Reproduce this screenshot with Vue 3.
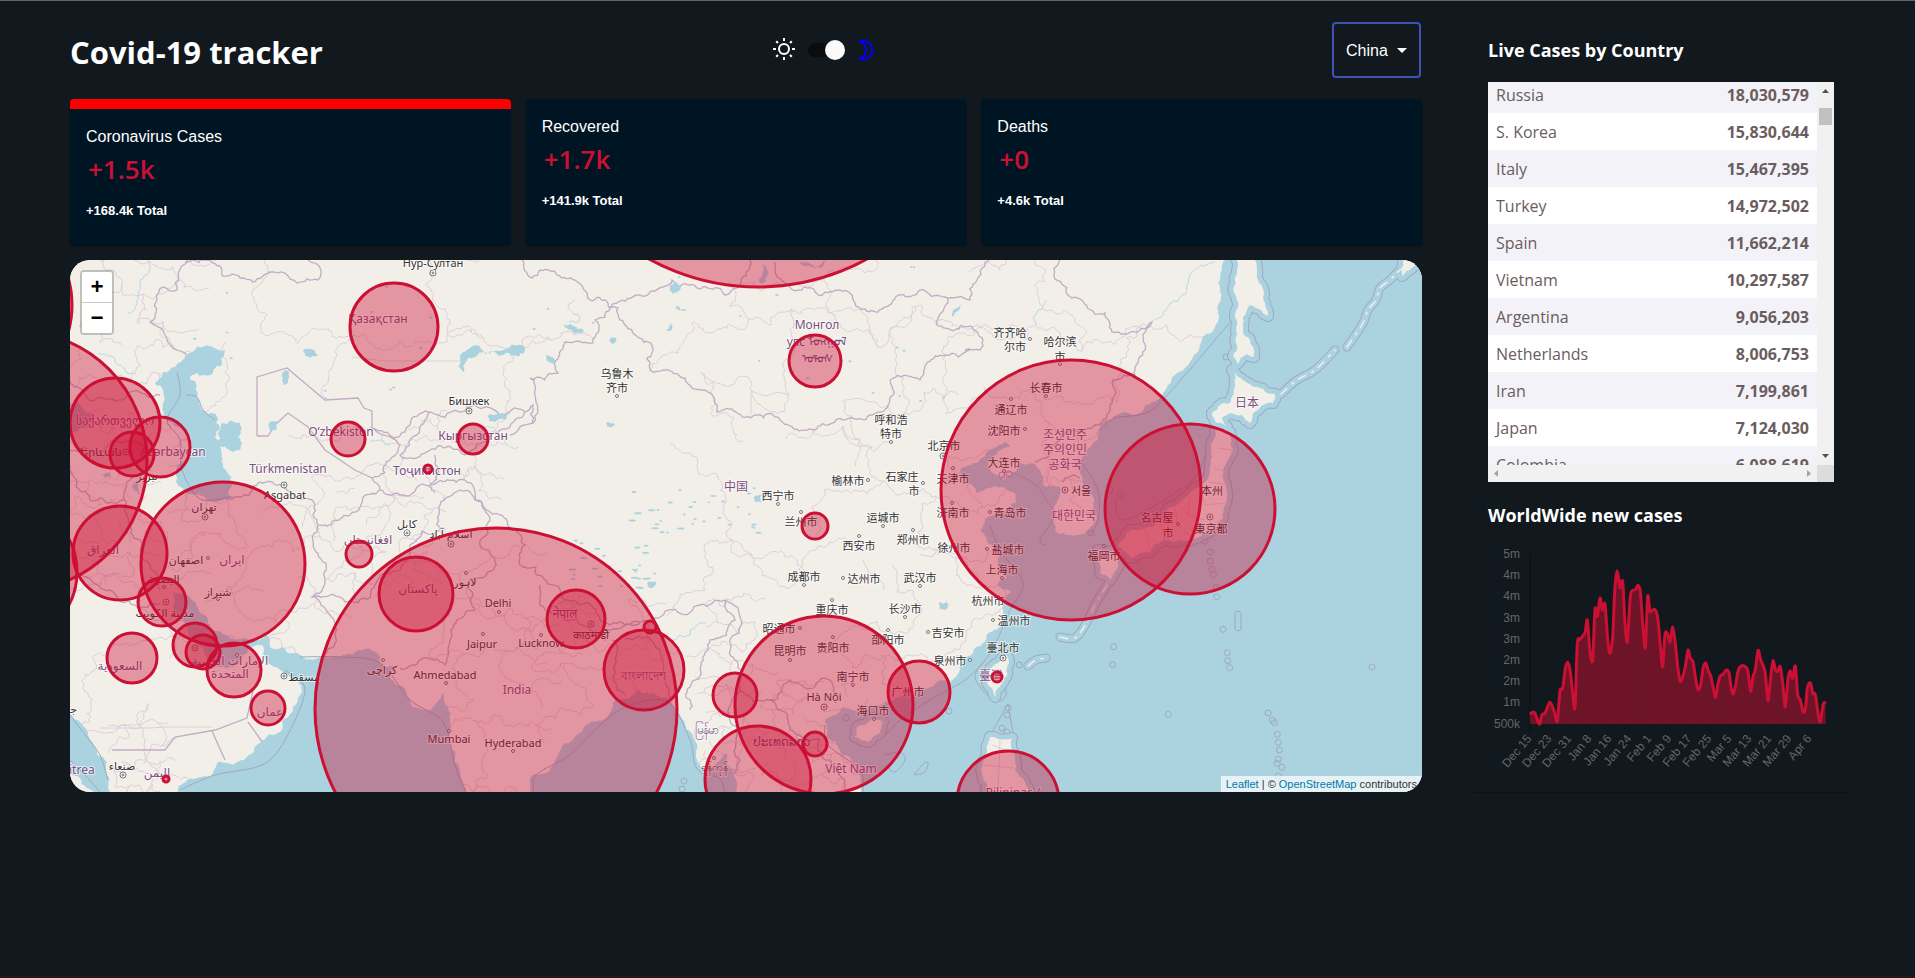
<script setup>
import { ref } from 'vue'

const countries = ['Worldwide', 'USA', 'India', 'Brazil', 'France', 'China']
const country = ref('China')
const dark = ref(true)
const activeCard = ref(0)

const stats = [
  { title: 'Coronavirus Cases', value: '+1.5k', total: '+168.4k Total' },
  { title: 'Recovered', value: '+1.7k', total: '+141.9k Total' },
  { title: 'Deaths', value: '+0', total: '+4.6k Total' }
]

const rows = [
  ['Russia', '18,030,579'],
  ['S. Korea', '15,830,644'],
  ['Italy', '15,467,395'],
  ['Turkey', '14,972,502'],
  ['Spain', '11,662,214'],
  ['Vietnam', '10,297,587'],
  ['Argentina', '9,056,203'],
  ['Netherlands', '8,006,753'],
  ['Iran', '7,199,861'],
  ['Japan', '7,124,030'],
  ['Colombia', '6,088,619']
]

/* ---------- map geometry ---------- */

let seed = 7
function rnd() {
  seed = (seed * 16807) % 2147483647
  return seed / 2147483647
}

function toPoints(flat) {
  const out = []
  for (let i = 0; i < flat.length; i += 2) out.push([flat[i], flat[i + 1]])
  return out
}

/* splits every segment until it is short and shifts the midpoints, as a coast or a border would bend */
function split(a, b, amp, min, out) {
  const dx = b[0] - a[0]
  const dy = b[1] - a[1]
  const len = Math.hypot(dx, dy)
  if (len < min) {
    out.push(b)
    return
  }
  const k = (rnd() - 0.5) * amp
  const m = [(a[0] + b[0]) / 2 - dy * k, (a[1] + b[1]) / 2 + dx * k]
  split(a, m, amp, min, out)
  split(m, b, amp, min, out)
}

function rough(flat, closed = false, amp = 0.5, min = 4) {
  const pts = toPoints(flat)
  if (closed) pts.push(pts[0])
  const out = [pts[0]]
  for (let i = 1; i < pts.length; i++) split(pts[i - 1], pts[i], amp, min, out)
  return 'M' + out.map((p) => p[0].toFixed(1) + ' ' + p[1].toFixed(1)).join('L') + (closed ? 'Z' : '')
}

function curve(points, tension) {
  let d = 'M' + points[0].join(' ')
  for (let i = 0; i < points.length - 1; i++) {
    const p0 = points[Math.max(0, i - 1)]
    const p1 = points[i]
    const p2 = points[i + 1]
    const p3 = points[Math.min(points.length - 1, i + 2)]
    const c = [
      p1[0] + (p2[0] - p0[0]) * tension,
      p1[1] + (p2[1] - p0[1]) * tension,
      p2[0] - (p3[0] - p1[0]) * tension,
      p2[1] - (p3[1] - p1[1]) * tension,
      p2[0],
      p2[1]
    ].map((v) => v.toFixed(1))
    d += `C${c[0]} ${c[1]} ${c[2]} ${c[3]} ${c[4]} ${c[5]}`
  }
  return d
}
const smooth = (flat) => curve(toPoints(flat), 0.16)

/* province lines: a jittered brick lattice per region [x, y, width, height, cell] */
const regions = [
  [70, 260, 110, 150, 30], [70, 410, 110, 170, 18], [180, 260, 350, 150, 80], [180, 500, 140, 150, 38],
  [330, 490, 110, 100, 22], [290, 440, 120, 60, 40], [400, 420, 100, 70, 28], [70, 590, 180, 130, 60],
  [110, 725, 60, 70, 16], [500, 620, 60, 80, 30], [420, 560, 110, 240, 44], [540, 610, 120, 120, 32],
  [640, 262, 330, 150, 66], [800, 440, 190, 130, 52], [840, 570, 170, 140, 46], [690, 600, 60, 170, 24],
  [760, 680, 100, 112, 16], [960, 262, 160, 170, 70], [1040, 430, 70, 110, 26],
  [985, 735, 40, 60, 12], [660, 470, 140, 120, 84], [700, 690, 60, 100, 20]
]
function lattice([x, y, w, h, c]) {
  const cols = Math.ceil(w / c)
  const lines = Math.ceil(h / c)
  const v = []
  for (let j = 0; j <= lines; j++) {
    v.push([])
    for (let i = 0; i <= cols; i++) {
      v[j].push([x + i * c + (j % 2 ? c / 2 : 0) + (rnd() - 0.5) * c * 0.7, y + j * c + (rnd() - 0.5) * c * 0.7])
    }
  }
  let d = ''
  for (let j = 0; j < lines; j++) {
    for (let i = 0; i < cols; i++) {
      if (rnd() > 0.25) d += rough([...v[j][i], ...v[j][i + 1]], false, 0.6, 4)
      if ((i + j) % 2 && rnd() > 0.1) d += rough([...v[j][i], ...v[j + 1][i]], false, 0.6, 4)
    }
  }
  return d
}
const provinces = regions.map(lattice).join('')

/* the seas close well outside the visible area, so that only their coasts show */
const seas = [
  [1226, 255, 1222, 270, 1218, 283, 1221, 300, 1218, 322, 1203, 337, 1193, 357, 1177, 373, 1163, 393, 1142, 412, 1117, 415, 1105, 420, 1100, 427, 1098, 440, 1087, 450, 1077, 463, 1083, 480, 1093, 497, 1097, 517, 1093, 525, 1088, 530, 1070, 535, 1057, 533, 1053, 520, 1055, 505, 1060, 487, 1043, 485, 1040, 470, 1032, 463, 1020, 463, 1003, 480, 988, 463, 1000, 450, 1010, 447, 1005, 442, 990, 450, 977, 463, 965, 467, 960, 470, 965, 480, 977, 493, 990, 488, 1015, 493, 1017, 502, 1000, 513, 985, 520, 980, 530, 997, 550, 998, 563, 1007, 577, 997, 585, 1012, 592, 1003, 603, 1002, 623, 988, 633, 983, 643, 973, 653, 960, 670, 950, 682, 923, 690, 900, 697, 873, 707, 860, 713, 843, 707, 825, 720, 827, 737, 840, 750, 857, 767, 864, 795, 864, 1000, 1700, 1000, 1700, 50, 1226, 50],
  [173, 592, 187, 595, 200, 613, 210, 627, 230, 638, 250, 640, 267, 635, 270, 647, 293, 653, 320, 657, 343, 655, 377, 653, 380, 663, 397, 667, 390, 678, 403, 687, 413, 707, 430, 710, 443, 693, 448, 707, 450, 733, 460, 770, 465, 795, 465, 900, 175, 900, 175, 795, 187, 780, 213, 773, 217, 763, 247, 757, 260, 743, 280, 732, 282, 722, 293, 707, 302, 690, 290, 677, 267, 663, 262, 645, 247, 653, 233, 667, 220, 667, 207, 660, 193, 640, 187, 627, 173, 607],
  [50, 712, 66, 712, 80, 722, 93, 743, 107, 762, 110, 795, 110, 830, 96, 830, 96, 795, 80, 778, 66, 768, 50, 768],
  [532, 795, 533, 775, 553, 765, 573, 740, 607, 717, 613, 702, 637, 690, 657, 695, 670, 700, 683, 720, 693, 737, 697, 760, 702, 770, 717, 763, 727, 753, 733, 773, 737, 795, 737, 880, 532, 880]
].map((p) => rough(p, true, 0.35, 4))

const waters = [
  [170, 370, 185, 356, 203, 347, 225, 350, 221, 366, 203, 375, 190, 378, 197, 397, 217, 417, 215, 437, 223, 443, 223, 467, 232, 477, 233, 500, 207, 500, 183, 488, 177, 467, 190, 450, 188, 433, 173, 423, 163, 407, 163, 390, 155, 383, 162, 373],
  [222, 423, 240, 423, 237, 437, 242, 443, 233, 452, 222, 447],
  [66, 400, 78, 402, 93, 413, 87, 428, 66, 437],
  [270, 422, 277, 421, 276, 430, 270, 431],
  [285, 370, 288, 371, 285, 385, 283, 384],
  [303, 351, 310, 349, 318, 355, 310, 358],
  [458, 367, 460, 357, 467, 350, 480, 347, 500, 351, 525, 348, 524, 353, 500, 356, 480, 352, 468, 358, 464, 372],
  [487, 416, 498, 413, 510, 413, 505, 420, 495, 422],
  [670, 285, 677, 282, 680, 290, 673, 294],
  [564, 324, 572, 325, 584, 331, 580, 333, 568, 329],
  [546, 354, 552, 357, 554, 364, 549, 362],
  [510, 351, 520, 347, 519, 353, 511, 356],
  [762, 264, 766, 267, 763, 284, 760, 283],
  [800, 262, 828, 260, 820, 265, 806, 266],
  [676, 305, 687, 309, 684, 311, 676, 308],
  [666, 330, 671, 323, 672, 329, 668, 331],
  [610, 339, 616, 338, 613, 346],
  [754, 497, 762, 495, 761, 503, 755, 502],
  [606, 423, 615, 424, 612, 427, 607, 426],
  [630, 570, 638, 568, 636, 573],
  [647, 583, 656, 582, 650, 588],
  [952, 314, 960, 304, 958, 311, 953, 317],
  [938, 603, 947, 600, 945, 610, 940, 609],
  [102, 475, 110, 472, 112, 477, 105, 479],
  [134, 480, 139, 484, 138, 495, 134, 490]
].map((p) => rough(p, true, 0.5, 3))

const rivers = [
  [148, 260, 140, 280, 138, 296, 128, 313], [575, 300, 568, 306, 580, 318, 569, 322], [1215, 262, 1190, 274, 1182, 295, 1170, 303, 1155, 320],
  [98, 353, 118, 365, 136, 374], [1046, 300, 1038, 310, 1036, 325], [672, 640, 690, 635, 706, 623], [370, 442, 390, 445]
].map((p) => rough(p, false, 0.5, 4))

const specks = []
for (let i = 0; i < 34; i++) specks.push([630 + rnd() * 130, 488 + rnd() * 45, 1 + rnd() * 3])
for (let i = 0; i < 26; i++) specks.push([565 + rnd() * 90, 540 + rnd() * 50, 1 + rnd() * 3])
for (let i = 0; i < 30; i++) specks.push([190 + rnd() * 760, 265 + rnd() * 140, 1 + rnd()])

const islands = [
  [1235, 255, 1253, 255, 1258, 280, 1265, 303, 1268, 316, 1262, 311, 1250, 305, 1243, 317, 1243, 333, 1253, 347, 1254, 357, 1247, 354, 1237, 364, 1233, 356, 1237, 333, 1235, 317, 1237, 300, 1235, 277],
  [1232, 370, 1247, 383, 1267, 393, 1275, 394, 1273, 403, 1260, 407, 1250, 423, 1230, 413, 1222, 418, 1227, 427, 1217, 423, 1212, 413, 1220, 405, 1230, 403, 1235, 387],
  [1215, 430, 1230, 432, 1233, 450, 1223, 470, 1227, 497, 1223, 517, 1213, 530, 1195, 538, 1180, 540, 1165, 540, 1150, 552, 1130, 558, 1118, 545, 1130, 530, 1155, 525, 1170, 507, 1190, 493, 1207, 480, 1212, 457],
  [1098, 550, 1117, 550, 1118, 567, 1110, 580, 1100, 573, 1098, 560],
  [1007, 655, 1009, 663, 1002, 683, 995, 697, 987, 683, 992, 667],
  [990, 737, 1012, 738, 1012, 750, 1015, 770, 1030, 795, 987, 795, 982, 775],
  [857, 727, 873, 718, 883, 722, 880, 733, 868, 742, 855, 737],
  [1403, 255, 1425, 255, 1412, 268, 1402, 276]
].map((p) => rough(p, true, 0.3, 4))

const chains = [
  [1347, 347, 1362, 325, 1368, 310, 1376, 300, 1380, 288, 1390, 280, 1400, 270, 1422, 252],
  [1281, 394, 1297, 380, 1315, 370, 1335, 350],
  [1060, 637, 1075, 638, 1087, 622, 1095, 605, 1107, 585],
  [1028, 666, 1036, 660, 1046, 658]
].map(smooth)

const borders = [
  [187, 260, 185, 264, 177, 290, 163, 287, 157, 300, 150, 322, 163, 330, 177, 350, 187, 357],
  [185, 262, 213, 263, 240, 278, 253, 282, 270, 272, 297, 283, 318, 280, 320, 268, 307, 258],
  [372, 428, 390, 437, 405, 432, 430, 412, 460, 412, 475, 405, 525, 412, 533, 405, 533, 423, 510, 435],
  [232, 500, 260, 482, 295, 497, 315, 505, 318, 525, 350, 515, 365, 495, 380, 490, 400, 495, 420, 485, 435, 493],
  [372, 428, 400, 445, 390, 460, 372, 478, 380, 490],
  [318, 525, 315, 550, 325, 580, 312, 597, 330, 615, 335, 635, 325, 655],
  [312, 597, 345, 602, 370, 598, 400, 570, 410, 545, 440, 530, 440, 505, 460, 490, 475, 500],
  [430, 412, 400, 455, 430, 450, 465, 455, 500, 430, 525, 412],
  [435, 455, 430, 485, 465, 480, 475, 500],
  [475, 500, 490, 520, 480, 545, 495, 560, 470, 580, 475, 610, 450, 640, 445, 665, 415, 665, 400, 668],
  [533, 423, 535, 395, 530, 378, 558, 373, 565, 342, 593, 343, 595, 320, 610, 308],
  [522, 260, 532, 278, 540, 270, 575, 280, 590, 300, 605, 300, 610, 308, 640, 295, 672, 280, 690, 285, 725, 295, 737, 288, 750, 260],
  [775, 262, 790, 287, 805, 287, 840, 290, 855, 303, 885, 307, 920, 290, 945, 297, 970, 300, 977, 280, 990, 258],
  [610, 308, 618, 308, 625, 325, 652, 345, 653, 372, 685, 378, 705, 390, 717, 412, 755, 415, 815, 430, 850, 418, 880, 412, 893, 395, 890, 380, 920, 380, 945, 355, 970, 350],
  [947, 297, 937, 325, 955, 330, 970, 326, 983, 340, 980, 350, 965, 350],
  [1060, 258, 1072, 298, 1105, 313, 1112, 332, 1130, 332, 1152, 322, 1145, 350, 1135, 370, 1135, 375, 1113, 380, 1110, 405, 1095, 425, 1075, 430, 1060, 440, 1035, 462],
  [1062, 482, 1080, 478],
  [475, 500, 500, 515, 525, 545, 520, 565, 545, 580, 565, 600, 600, 620, 640, 622, 655, 618, 700, 605, 725, 600, 735, 620, 710, 640, 695, 680, 690, 710],
  [540, 585, 540, 605, 565, 620, 605, 640, 640, 622],
  [725, 600, 742, 622, 735, 660, 740, 690, 770, 700, 790, 680, 830, 680, 840, 700],
  [740, 690, 730, 720, 740, 760, 735, 792], [770, 700, 790, 730, 820, 740, 840, 775, 845, 792],
  [612, 640, 615, 665, 625, 695], [625, 640, 660, 650, 665, 680, 672, 698],
  [80, 575, 110, 590, 135, 605, 160, 603], [130, 480, 125, 500, 140, 540, 150, 565, 160, 590],
  [70, 470, 90, 500, 125, 500], [70, 450, 100, 452, 130, 440, 150, 470, 130, 480], [70, 380, 120, 400, 160, 395]
].map((p) => rough(p, false, 0.45, 4))

const plainBorders = [
  'M257 436V377L287 368 325 400 358 398 364 408 372 411V428M257 436H268L275 425 288 413 308 427 325 450 355 470 372 478',
  'M112 750H150L165 750 175 737 215 730 247 718 253 690M212 731L225 760M248 722L263 743'
]
const plainProvinces =
  'M352 357L385 361H460M100 728H150L165 727H212M751 391V415M751 391L765 396 778 392 790 395M1218 448L1232 450M1214 468L1224 471M1208 482L1226 484M1200 490L1205 505 1225 503M1190 496L1188 515 1205 520M1175 508L1178 525 1192 538M1160 522L1165 540M1145 528L1150 550M992 745L1010 752M985 765L1013 768M1000 740L998 790'

const marine = [
  [186, 395, 197, 397, 203, 410, 215, 420], [177, 372, 180, 395, 167, 420, 180, 440, 182, 470, 200, 499, 230, 497],
  [300, 657, 340, 657, 380, 663, 410, 700, 443, 722, 455, 765, 467, 795], [180, 790, 215, 775, 262, 765, 285, 740, 305, 690, 285, 670],
  [534, 795, 536, 775, 570, 755, 600, 725, 630, 705, 668, 702, 690, 740, 695, 765, 705, 775, 720, 778, 725, 795],
  [863, 795, 860, 770, 828, 745, 825, 725], [854, 730, 865, 743, 885, 735, 900, 720, 930, 700, 965, 680, 985, 660, 997, 640, 1010, 610, 1023, 583, 1000, 550, 990, 525],
  [985, 660, 975, 678, 993, 700, 1005, 697, 1006, 680, 1011, 653, 990, 665], [1008, 704, 990, 737, 985, 760, 980, 792], [1008, 704, 1014, 740, 1015, 760, 1034, 795],
  [1046, 545, 1040, 540, 1055, 515, 1046, 500, 1036, 485, 1010, 472, 1000, 480], [1080, 460, 1098, 490, 1098, 520, 1090, 535],
  [1100, 430, 1115, 418, 1150, 411, 1185, 375, 1215, 340, 1232, 320], [885, 755, 900, 752, 905, 760, 895, 772, 885, 765], [914, 775, 922, 765, 928, 762, 925, 772, 915, 775],
  [70, 760, 85, 775, 100, 792], [70, 715, 85, 735, 100, 755, 108, 780], [1115, 500, 1125, 520, 1180, 490, 1200, 470, 1208, 440]
].map(smooth)

const isles = [
  [1113.7, 646.7], [1112.7, 664.7], [1223, 629.3], [1227.3, 652.7], [1227.7, 660.7], [1229.7, 667.7], [1372, 667], [1168.3, 714.3],
  [1268.3, 713], [1272.3, 720], [1274.3, 722.7], [1277.3, 734.3], [1278.3, 742.3], [1279.3, 750], [1278.3, 759.3], [1277.3, 763.3], [1281.7, 767.3], [1278.5, 776], [1273, 785],
  [1019.3, 665], [1210.3, 552], [1210.3, 561], [1212, 569], [1213.3, 574.7], [1216.3, 587.3], [1216.7, 596.7], [1237, 355.7],
  [684, 781], [682, 789], [846, 718], [1110, 490], [1120, 495], [1002, 475], [1009, 474], [1091, 533], [1205, 541], [949, 711],
  [1008, 708], [1007, 715], [1002, 728], [1007, 732], [1226, 357]
]

const cities = [
  ['Нур-Султан', 433, 267], ['Бишкек', 469, 405], ['Aşgabat', 285, 499], ['Երևան', 101, 456], ['تبریز', 147, 480], ['تهران', 204, 511],
  ['اصفهان', 186, 564], ['البصرة', 164, 583], ['شیراز', 218, 596], ['مدينة الكويت', 165, 617], ['مسقط', 304, 681], ['صنعاء', 122, 770],
  ['جدة', 68, 713], ['کابل', 407, 528], ['اسلام آباد', 451, 538], ['لاہور', 465, 586], ['Delhi', 498, 607], ['Jaipur', 482, 648], ['كراچی', 382, 674],
  ['Ahmedabad', 445, 679], ['Mumbai', 449, 743], ['Hyderabad', 513, 747], ['Lucknow', 541, 647], ['काठमाडौं', 591, 639],
  ['ရန်ကုန်', 714, 771], ['Hà Nội', 824, 701], ['乌鲁木', 617, 378], ['齐市', 617, 392], ['西宁市', 778, 500], ['兰州市', 801, 526],
  ['榆林市', 848, 485], ['石家庄', 902, 481], ['市', 914, 495], ['运城市', 883, 522], ['呼和浩', 891, 424], ['特市', 891, 438],
  ['北京市', 944, 450], ['天津市', 953, 483], ['济南市', 953, 517], ['西安市', 859, 550], ['郑州市', 913, 544], ['徐州市', 954, 552],
  ['成都市', 804, 581], ['达州市', 864, 583], ['武汉市', 920, 582], ['重庆市', 832, 614], ['长沙市', 905, 613], ['昭通市', 779, 633],
  ['昆明市', 790, 655], ['贵阳市', 833, 652], ['邵阳市', 888, 644], ['吉安市', 948, 637], ['泉州市', 950, 665], ['南宁市', 853, 681],
  ['海口市', 873, 715], ['广州市', 908, 696], ['齐齐哈', 1010, 337], ['尔市', 1015, 351], ['哈尔滨', 1060, 346], ['市', 1060, 361],
  ['长春市', 1046, 392], ['通辽市', 1011, 414], ['沈阳市', 1004, 435], ['大连市', 1004, 467], ['서울', 1081, 495], ['青岛市', 1010, 517],
  ['盐城市', 1008, 554], ['上海市', 1002, 574], ['杭州市', 988, 605], ['温州市', 1014, 625], ['臺北市', 1003, 652], ['本州', 1212, 495],
  ['東京都', 1211, 533], ['名古屋', 1157, 522], ['市', 1168, 537], ['福岡市', 1104, 560]
]

const nations = [
  ['Қазақстан', 378, 323], ['Кыргызстан', 473, 440], ['Oʻzbekiston', 341, 436], ['Тоҷикистон', 427, 475], ['Türkmenistan', 288, 473],
  ['საქართველო', 115, 425], ['Azərbaycan', 173, 456], ['العراق', 103, 554], ['ایران', 232, 564], ['الإمارات العربية', 230, 665],
  ['المتحدة', 230, 678], ['السعودية', 120, 670], ['عمان', 270, 716], ['اليمن', 157, 777], ['Eritrea', 76, 774], ['افغانستان', 368, 544],
  ['پاکستان', 418, 593], ['India', 517, 694], ['नेपाल', 565, 618], ['বাংলাদেশ', 643, 680], ['မြန်မာ', 706, 734], ['ປະເທດລາວ', 782, 746],
  ['Việt Nam', 851, 773], ['Монгол', 817, 329], ['улс ᠮᠣᠩᠭᠣᠯ', 817, 346], ['ᠤᠯᠤᠰ', 817, 363], ['中国', 736, 491], ['조선민주', 1065, 439],
  ['주의인민', 1065, 454], ['공화국', 1065, 469], ['대한민국', 1074, 520], ['臺灣', 991, 680], ['日本', 1247, 407], ['Pilipinas /', 1013, 797]
]

const towns = [
  [617, 396], [778, 504], [801, 512], [868, 480], [923, 483], [883, 526], [891, 442], [953, 468], [952, 503], [859, 536], [913, 530],
  [804, 585], [843, 578], [920, 586], [832, 600], [905, 617], [800, 628], [790, 660], [833, 637], [888, 630], [928, 632], [970, 660],
  [853, 685], [874, 719], [1030, 339], [1060, 364], [1046, 396], [1011, 399], [1025, 429], [1004, 471], [990, 512], [987, 549],
  [1002, 578], [993, 620], [1178, 524], [1104, 546], [208, 558], [164, 587], [218, 599], [466, 573], [499, 612], [483, 634], [383, 660],
  [446, 683], [449, 731], [513, 751], [541, 635], [714, 758], [237, 655]
]

const capitals = [
  [433, 273], [469, 411], [284, 485], [126, 452], [205, 517], [166, 602], [284, 676], [123, 775], [407, 533], [451, 544], [591, 624],
  [824, 707], [943, 456], [1065, 490], [1003, 658], [1210, 517], [195, 648]
]

const circles = [
  [758, 61, 226], [394, 327, 44], [-28, 305, 100], [17, 461, 130], [115, 423, 45], [160, 447, 30], [132, 454, 22], [120, 553, 47],
  [223, 564, 82], [7, 572, 70], [162, 602, 24], [195, 645, 22], [203, 652, 17], [234, 670, 27], [132, 658, 25], [268, 708, 17],
  [166, 779, 3], [359, 554, 13], [416, 594, 37], [496, 709, 181], [348, 439, 17], [473, 439, 15], [428, 469, 4], [576, 619, 29],
  [650, 627, 6], [644, 670, 40], [735, 695, 22], [758, 779, 53], [824, 705, 89], [815, 744, 12], [919, 692, 31], [997, 677, 5],
  [1008, 802, 51], [815, 526, 13], [815, 361, 26], [1071, 490, 130], [1190, 509, 85]
]

/* ---------- chart ---------- */

const series = toPoints([
  209, 702, 224, 698, 238, 733, 246, 704, 255, 700, 270, 667, 283, 695, 292, 724, 300, 633, 308, 625, 316, 565, 323, 547, 330, 570,
  338, 640, 345, 682, 352, 492, 360, 478, 375, 458, 382, 420, 390, 515, 398, 540, 405, 388, 412, 410, 420, 354, 427, 390, 435, 372,
  443, 480, 450, 520, 458, 470, 465, 320, 472, 273, 480, 323, 488, 305, 495, 430, 502, 485, 511, 350, 519, 331, 527, 328, 534, 316,
  541, 335, 548, 430, 556, 503, 563, 349, 570, 394, 578, 390, 586, 390, 594, 420, 602, 510, 608, 560, 615, 463, 622, 460, 630, 486,
  638, 441, 646, 490, 653, 560, 661, 604, 668, 590, 676, 560, 684, 510, 691, 535, 699, 545, 706, 590, 714, 629, 722, 615, 729, 565,
  737, 549, 744, 570, 752, 588, 759, 620, 767, 652, 774, 610, 781, 588, 789, 583, 799, 570, 807, 578, 813, 620, 820, 642, 827, 615,
  834, 573, 841, 560, 853, 558, 863, 572, 872, 634, 879, 590, 886, 570, 894, 511, 902, 540, 910, 558, 916, 580, 924, 662, 932, 590,
  939, 542, 947, 572, 954, 573, 961, 560, 968, 610, 976, 682, 984, 595, 991, 572, 998, 595, 1006, 558, 1013, 645, 1021, 660,
  1030, 697, 1037, 680, 1042, 625, 1051, 608, 1058, 640, 1066, 643, 1074, 700, 1081, 725, 1089, 675, 1097, 665
]).map(([x, y]) => [(x - 84) / 3, (y - 174) / 3])
const chartLine = curve(series, 0.14)
const last = series[series.length - 1][0]
const chartArea = `${chartLine}L${last} 186L42 186Z`
const yLabels = ['5m', '4m', '4m', '3m', '3m', '2m', '2m', '1m', '500k']
const xLabels = [
  'Dec 15', 'Dec 23', 'Dec 31', 'Jan 8', 'Jan 16', 'Jan 24', 'Feb 1', 'Feb 9', 'Feb 17', 'Feb 25', 'Mar 5', 'Mar 13', 'Mar 21',
  'Mar 29', 'Apr 6'
]
</script>

<template>
  <div class="app">
    <main class="left">
      <header class="header">
        <h1>Covid-19 tracker</h1>
        <div class="theme">
          <svg class="icon" viewBox="0 0 24 24" fill="none" stroke="#fff" stroke-width="2">
            <circle cx="12" cy="11" r="5" />
            <path d="M12 0v3M12 19v3M1 11h3M20 11h3M4.200 3.200l1.800 1.800M18 17l1.800 1.800M4.200 18.800L6 17M18 5l1.800-1.800" />
          </svg>
          <label class="switch">
            <input v-model="dark" type="checkbox" aria-label="Dark mode" />
            <span class="thumb"></span>
          </label>
          <svg class="icon" viewBox="0 0 24 24" fill="none" stroke="#00f" stroke-width="2">
            <path d="M6 3c1-.3 2-.4 3-.4a9.300 9.300 0 0 1 0 18.800c-1 0-2-.1-3-.4 3.800-2 6-5.200 6-9s-2.200-7-6-9z" />
          </svg>
        </div>
        <div class="picker">
          <select v-model="country" aria-label="Country">
            <option v-for="c in countries" :key="c">{{ c }}</option>
          </select>
          <span class="caret"></span>
        </div>
      </header>

      <section class="stats">
        <article
          v-for="(s, i) in stats"
          :key="s.title"
          class="stat"
          :class="{ active: i === activeCard }"
          @click="activeCard = i"
        >
          <p class="stat-title">{{ s.title }}</p>
          <h2 class="stat-value">{{ s.value }}</h2>
          <p class="stat-total">{{ s.total }}</p>
        </article>
      </section>

      <section class="map">
        <svg class="tiles" viewBox="70 260 1352 532" preserveAspectRatio="xMidYMid slice">
          <rect x="70" y="260" width="1352" height="532" fill="#f2efe9" />
          <path class="province" :d="provinces" />
          <path v-for="(d, i) in rivers" :key="'r' + i" :d="d" class="river" />
          <path v-for="(d, i) in borders" :key="'b' + i" :d="d" class="border" />
          <path v-for="(d, i) in plainBorders" :key="'p' + i" :d="d" class="border" />
          <path v-for="(d, i) in seas" :key="'s' + i" :d="d" class="water" />
          <path v-for="(d, i) in waters" :key="'w' + i" :d="d" class="water" />
          <ellipse v-for="(s, i) in specks" :key="'k' + i" :cx="s[0]" :cy="s[1]" :rx="s[2]" ry="1" class="water" />
          <path v-for="(d, i) in marine" :key="'m' + i" :d="d" class="marine" />
          <circle v-for="(c, i) in isles" :key="'i' + i" :cx="c[0]" :cy="c[1]" r="3" class="marine" />
          <rect x="1235" y="611" width="6" height="20" rx="3" class="marine" />
          <path v-for="(d, i) in islands" :key="'o' + i" :d="d" class="shelf-edge" />
          <path v-for="(d, i) in chains" :key="'e' + i" :d="d" class="chain-edge" />
          <path v-for="(d, i) in islands" :key="'h' + i" :d="d" class="shelf" />
          <path v-for="(d, i) in chains" :key="'f' + i" :d="d" class="chain-shelf" />
          <path v-for="(d, i) in chains" :key="'c' + i" :d="d" class="chain" />
          <path v-for="(d, i) in islands" :key="'l' + i" :d="d" class="land" />
          <path class="province" :d="plainProvinces" />
          <circle v-for="(c, i) in towns" :key="'t' + i" :cx="c[0]" :cy="c[1]" r="1.500" class="town" />
          <g v-for="(c, i) in capitals" :key="'a' + i" class="town">
            <circle :cx="c[0]" :cy="c[1]" r="3" />
            <circle :cx="c[0]" :cy="c[1]" r="1" />
          </g>
          <text v-for="(t, i) in nations" :key="'n' + i" :x="t[1]" :y="t[2]" class="nation">{{ t[0] }}</text>
          <text v-for="(t, i) in cities" :key="'y' + i" :x="t[1]" :y="t[2]" class="city">{{ t[0] }}</text>
          <circle v-for="(c, i) in circles" :key="'z' + i" :cx="c[0]" :cy="c[1]" :r="c[2]" class="cases" />
        </svg>
        <div class="zoom">
          <button type="button" aria-label="Zoom in">+</button>
          <button type="button" aria-label="Zoom out">−</button>
        </div>
        <div class="attribution">
          <a href="#leaflet">Leaflet</a> | © <a href="#osm">OpenStreetMap</a> contributors
        </div>
      </section>
    </main>

    <aside class="right">
      <h3>Live Cases by Country</h3>
      <div class="list">
        <div class="rows">
          <table>
            <tbody>
              <tr v-for="r in rows" :key="r[0]">
                <td>{{ r[0] }}</td>
                <td><strong>{{ r[1] }}</strong></td>
              </tr>
            </tbody>
          </table>
        </div>
        <div class="vbar">
          <svg viewBox="0 0 17 17"><path d="M5 11l3.500-4L12 11z" fill="#505050" /></svg>
          <span class="grip"></span>
          <svg class="end" viewBox="0 0 17 17"><path d="M5 6l3.500 4L12 6z" fill="#505050" /></svg>
        </div>
        <div class="hbar">
          <svg viewBox="0 0 17 17"><path d="M10 5L6 8.500l4 3.500z" fill="#a3a3a3" /></svg>
          <svg viewBox="0 0 17 17"><path d="M7 5l4 3.500L7 12z" fill="#a3a3a3" /></svg>
        </div>
        <div class="corner"></div>
      </div>

      <h3 class="chart-title">WorldWide new cases</h3>
      <svg class="chart" viewBox="0 0 346 238">
        <path v-for="(l, i) in xLabels" :key="'g' + i" :d="`M${42 + i * 20} 16V194`" class="grid" :class="{ axis: i === 0 }" />
        <path :d="chartArea" fill="#cc1034" fill-opacity=".5" />
        <path :d="chartLine" fill="none" stroke="#cc1034" stroke-width="3" stroke-linejoin="round" />
        <text v-for="(l, i) in yLabels" :key="'v' + i" x="32" :y="20 + i * 21.200" class="tick">{{ l }}</text>
        <text
          v-for="(l, i) in xLabels"
          :key="'x' + i"
          class="tick"
          :transform="`translate(${44 + i * 20} 201) rotate(-50)`"
        >{{ l }}</text>
      </svg>
    </aside>
  </div>
</template>

<style>
body {
  background: #11181e;
}
</style>

<style scoped>
* {
  box-sizing: border-box;
}
.app {
  min-height: 100vh;
  padding: 21px 66px 20px 70px;
  display: grid;
  grid-template-columns: minmax(0, 1fr) 377px;
  align-items: start;
  gap: 50px;
  background: #11181e;
  border-top: 1px solid #5f6663;
  border-bottom: 2px solid #20191d;
  color: #fff;
  font-family: "Open Sans", "Noto Sans", sans-serif;
}
.header {
  display: flex;
  align-items: center;
  justify-content: space-between;
  height: 56px;
  margin-bottom: 21px;
}
h1 {
  margin: 4px 0 0;
  font-size: 31px;
  line-height: 42px;
  font-weight: 700;
}
.theme {
  display: flex;
  align-items: center;
  margin-right: 4px;
}
.icon {
  width: 24px;
  height: 24px;
}
.switch {
  position: relative;
  display: flex;
  padding: 12px;
  width: 58px;
}
.switch input {
  appearance: none;
  margin: 0;
  width: 34px;
  height: 14px;
  border-radius: 7px;
  background: #090d10;
}
.thumb {
  position: absolute;
  top: 9px;
  right: 9px;
  width: 20px;
  height: 20px;
  border-radius: 50%;
  background: #fafafa;
}
.picker {
  position: relative;
}
.picker select {
  appearance: none;
  width: 89px;
  height: 56px;
  margin-right: 1px;
  padding: 0 24px 0 12px;
  border: 2px solid #3f51b5;
  border-radius: 4px;
  background: transparent;
  color: #fff;
  font: 16px "Liberation Sans", sans-serif;
}
.picker option {
  color: #111;
}
.caret {
  position: absolute;
  top: 26px;
  right: 15px;
  border: 5px solid transparent;
  border-top-color: #fff;
  border-bottom: 0;
  pointer-events: none;
}
.stats {
  display: grid;
  grid-template-columns: repeat(3, minmax(0, 1fr));
  gap: 15px;
}
.stat {
  height: 146px;
  padding: 16px;
  border-radius: 4px;
  background: #001524;
  box-shadow: 0 1px 2px rgba(0, 0, 0, 0.4);
  cursor: pointer;
}
.stat.active {
  border-top: 10px solid #f00;
}
.stat p,
.stat h2 {
  margin: 0;
}
.stat-title {
  font: 16px/24px "Liberation Sans", sans-serif;
}
.stat-value {
  padding-left: 2px;
  font-size: 26px;
  line-height: 40px;
  font-weight: 600;
  color: #cc1034;
}
.stat .stat-total {
  margin-top: 12px;
  font: bold 13px/20px "Liberation Sans", sans-serif;
}
.map {
  position: relative;
  height: 532px;
  margin-top: 15px;
  border-radius: 20px;
  overflow: hidden;
  background: #aad3df;
}
.tiles {
  display: block;
  width: 100%;
  height: 100%;
}
.province {
  fill: none;
  stroke: #ddcfda;
  stroke-width: 1;
}
.border {
  fill: none;
  stroke: #c3acc3;
  stroke-width: 1.3;
}
.river {
  fill: none;
  stroke: #b5dae5;
  stroke-width: 1;
}
.water {
  fill: #aad3df;
}
.marine {
  fill: none;
  stroke: #a0a8c4;
  stroke-width: 1;
}
.shelf-edge {
  fill: #a0a8c4;
  stroke: #a0a8c4;
  stroke-width: 12;
  stroke-linejoin: round;
}
.shelf {
  fill: #aad3df;
  stroke: #aad3df;
  stroke-width: 10;
  stroke-linejoin: round;
}
.chain-edge,
.chain-shelf,
.chain {
  fill: none;
  stroke: #a0a8c4;
  stroke-width: 9;
  stroke-linecap: round;
}
.chain-shelf {
  stroke: #aad3df;
  stroke-width: 7;
}
.chain {
  stroke: #f2efe9;
  stroke-width: 1.5;
  stroke-dasharray: 8 7 2 6;
}
.land {
  fill: #f2efe9;
}
.town {
  fill: #fff;
  stroke: #555;
  stroke-width: 0.8;
}
.city,
.nation {
  text-anchor: middle;
  font-family: "Noto Sans", "Noto Sans CJK SC", "Noto Sans CJK KR", "DejaVu Sans", sans-serif;
  font-size: 11px;
  fill: #333;
  stroke: rgba(255, 255, 255, 0.6);
  stroke-width: 2;
  paint-order: stroke;
}
.nation {
  font-size: 12px;
  fill: #7b5080;
}
.cases {
  fill: #cc1034;
  fill-opacity: 0.4;
  stroke: #cc1034;
  stroke-width: 3;
}
.zoom {
  position: absolute;
  top: 10px;
  left: 10px;
  display: flex;
  flex-direction: column;
  border: 2px solid rgba(0, 0, 0, 0.2);
  border-radius: 4px;
  background-clip: padding-box;
}
.zoom button {
  width: 30px;
  height: 30px;
  padding: 4px 0 0;
  border: 0;
  border-radius: 0 0 2px 2px;
  background: #fff;
  color: #000;
  font: bold 22px/26px "Liberation Mono", monospace;
}
.zoom button:first-child {
  height: 31px;
  border-bottom: 1px solid #ccc;
  border-radius: 2px 2px 0 0;
}
.attribution {
  position: absolute;
  right: 0;
  bottom: 0;
  padding: 0 5px;
  background: rgba(255, 255, 255, 0.7);
  color: #333;
  font: 11px/16px "Liberation Sans", sans-serif;
}
.attribution a {
  color: #0078a8;
  text-decoration: none;
}
.right {
  padding: 0 15px 16px 16px;
  border-radius: 4px;
  box-shadow: 0 1px 1px rgba(0, 0, 0, 0.3);
}
h3 {
  margin: 16px 0 19px;
  font-size: 18px;
  line-height: 25px;
  font-weight: 700;
}
.list {
  display: grid;
  grid-template: minmax(0, 1fr) 17px / minmax(0, 1fr) 17px;
  height: 400px;
}
.rows {
  overflow: hidden;
  background: #fff;
}
table {
  width: 100%;
  margin-top: -6px;
  border-collapse: collapse;
  color: #6a5d5d;
  font-size: 16px;
  line-height: 21px;
}
tr:nth-child(odd) {
  background: #f3f2f8;
}
td {
  height: 37px;
  padding: 9px 8px 7px;
}
td:last-child {
  text-align: right;
}
.vbar,
.hbar {
  display: flex;
  background: #f1f1f1;
}
.vbar {
  flex-direction: column;
}
.vbar svg,
.hbar svg {
  width: 17px;
  height: 17px;
}
.hbar {
  justify-content: space-between;
}
.grip {
  height: 17px;
  margin: 9px 2px 0;
  background: #c1c1c1;
}
.end {
  margin-top: auto;
}
.corner {
  background: #dcdcdc;
}
.chart-title {
  margin: 21px 0 10px;
}
.chart {
  display: block;
  width: 100%;
}
.grid {
  stroke: rgba(0, 0, 0, 0.1);
  stroke-width: 1;
}
.grid.axis {
  stroke: rgba(0, 0, 0, 0.35);
}
.tick {
  fill: #666;
  font: 12px "Liberation Sans", sans-serif;
  text-anchor: end;
}
</style>
